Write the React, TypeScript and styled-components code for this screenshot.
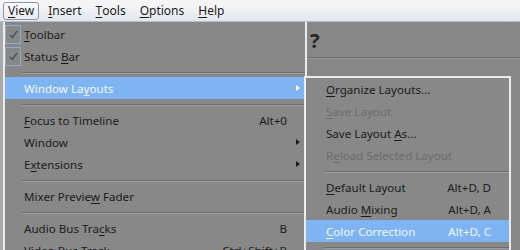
import React from "react";
import styled, { createGlobalStyle } from "styled-components";

const GlobalStyle = createGlobalStyle`
  html, body {
    margin: 0;
    padding: 0;
    background: #878787;
  }
  body {
    font-family: "Noto Sans", "Open Sans", sans-serif;
    font-size: 11.6px;
    color: #1b1b1b;
  }
`;

const Screen = styled.div({
  width: "520px",
  height: "250px",
  overflow: "hidden",
  position: "relative",
  display: "flex",
  flexDirection: "column",
  background: "#878787"
});

const MenuBar = styled.div({
  height: "22px",
  boxSizing: "border-box",
  display: "flex",
  alignItems: "center",
  paddingLeft: "1px",
  background: "linear-gradient(#f6f6f7 0%, #f3f4f6 35%, #e3e6ee 100%)",
  borderBottom: "1px solid #b9bdc6"
});

const MenuTitle = styled.div<{ $open?: boolean }>(({ $open }) => ({
  height: "18px",
  boxSizing: "border-box",
  display: "flex",
  alignItems: "center",
  padding: $open ? "0 4px" : "0 7px",
  margin: $open ? "0 2px" : 0,
  border: $open ? "1px solid #8c95a4" : "none",
  borderRadius: "3px",
  background: $open ? "linear-gradient(#fbfbfc, #e9ebf0)" : "transparent",
  fontSize: "12px",
  color: "#1b1b1b"
}));

const Workspace = styled.div({
  flex: 1,
  position: "relative",
  display: "flex"
});

const LeftStrip = styled.div({
  width: "3px",
  background: "#a9a9a9"
});

const LeftPane = styled.div({
  width: "304px"
});

const RightPane = styled.div({
  flex: 1,
  display: "flex",
  flexDirection: "column"
});

const PaneHeading = styled.div({
  height: "36px",
  boxSizing: "border-box",
  borderBottom: "1px solid #6f6f6f",
  boxShadow: "0 1px 0 #959595",
  padding: "8px 0 0 3px",
  fontWeight: 700,
  fontSize: "20px",
  lineHeight: "22px",
  color: "#262626"
});

const Menu = styled.div<{ $left: number; $top: number; $width: number }>(
  ({ $left, $top, $width }) => ({
    position: "absolute",
    left: `${$left}px`,
    top: `${$top}px`,
    width: `${$width}px`,
    boxSizing: "border-box",
    background: "#888888",
    borderLeft: "2px solid #ececec",
    borderRight: "2px solid #ececec",
    paddingTop: "1px",
    paddingBottom: "4px"
  })
);

const SubMenu = styled(Menu)({
  borderTop: "2px solid #ececec",
  paddingTop: 0
});

const Row = styled.div<{ $active?: boolean; $disabled?: boolean; $pad: number }>(
  ({ $active, $disabled, $pad }) => ({
    height: "22px",
    display: "flex",
    alignItems: "center",
    position: "relative",
    paddingLeft: `${$pad}px`,
    paddingRight: "18px",
    background: $active ? "#7fb4f3" : "transparent",
    color: $active ? "#f4f7fb" : $disabled ? "#6c6c6c" : "#1b1b1b",
    whiteSpace: "nowrap"
  })
);

const Label = styled.span({
  flex: 1
});

const Shortcut = styled.span({
  textAlign: "right"
});

const Arrow = styled.span<{ $active?: boolean }>(({ $active }) => ({
  position: "absolute",
  right: "5px",
  top: "8px",
  width: 0,
  height: 0,
  borderTop: "3.5px solid transparent",
  borderBottom: "3.5px solid transparent",
  borderLeft: `4px solid ${$active ? "#ffffff" : "#1b1b1b"}`
}));

const CheckBox = styled.span({
  position: "absolute",
  left: "0px",
  top: "2px",
  width: "16px",
  height: "19px",
  boxSizing: "border-box",
  border: "1px solid #92aacb",
  display: "flex",
  alignItems: "center",
  justifyContent: "center"
});

const Separator = styled.div<{ $inset: number }>(({ $inset }) => ({
  height: "10px",
  display: "flex",
  flexDirection: "column",
  justifyContent: "flex-start",
  paddingTop: "5px",
  boxSizing: "border-box",
  marginLeft: `${$inset}px`,
  "&::before": {
    content: '""',
    height: "1px",
    background: "#6e6e6e"
  },
  "&::after": {
    content: '""',
    height: "1px",
    background: "#9d9d9d"
  }
}));

const Key = styled.u({
  textDecorationThickness: "1px",
  textUnderlineOffset: "2px"
});

const Check = () => (
  <svg width="9" height="9" viewBox="0 0 9 9">
    <path d="M1 5 L3.5 7.5 L8 1" fill="none" stroke="#4f4f4f" strokeWidth="1.4" />
  </svg>
);

type Item = {
  pre?: string;
  key?: string;
  post?: string;
  shortcut?: string;
  sub?: boolean;
  active?: boolean;
  disabled?: boolean;
  checked?: boolean;
  sep?: boolean;
};

const viewItems: Item[] = [
  { key: "T", post: "oolbar", checked: true },
  { pre: "Status ", key: "B", post: "ar", checked: true },
  { sep: true },
  { pre: "Window La", key: "y", post: "outs", sub: true, active: true },
  { sep: true },
  { key: "F", post: "ocus to Timeline", shortcut: "Alt+0" },
  { pre: "Window", sub: true },
  { pre: "E", key: "x", post: "tensions", sub: true },
  { sep: true },
  { pre: "Mixer Previe", key: "w", post: " Fader" },
  { sep: true },
  { pre: "Audio Bus Tra", key: "c", post: "ks", shortcut: "B" },
  { pre: "Video Bus Track", shortcut: "Ctrl+Shift+B" }
];

const layoutItems: Item[] = [
  { key: "O", post: "rganize Layouts..." },
  { key: "S", post: "ave Layout", disabled: true },
  { pre: "Save Layout ", key: "A", post: "s..." },
  { pre: "R", key: "e", post: "load Selected Layout", disabled: true },
  { sep: true },
  { key: "D", post: "efault Layout", shortcut: "Alt+D, D" },
  { pre: "Audio ", key: "M", post: "ixing", shortcut: "Alt+D, A" },
  { key: "C", post: "olor Correction", shortcut: "Alt+D, C", active: true },
  { sep: true }
];

const renderItems = (items: Item[], pad: number, sepInset: number) =>
  items.map((it, i) =>
    it.sep ? (
      <Separator key={i} $inset={sepInset} />
    ) : (
      <Row key={i} $pad={pad} $active={it.active} $disabled={it.disabled}>
        {it.checked && (
          <CheckBox>
            <Check />
          </CheckBox>
        )}
        <Label>
          {it.pre}
          {it.key && <Key>{it.key}</Key>}
          {it.post}
        </Label>
        {it.shortcut && <Shortcut>{it.shortcut}</Shortcut>}
        {it.sub && <Arrow $active={it.active} />}
      </Row>
    )
  );

const App = () => (
  <Screen>
    <GlobalStyle />
    <MenuBar>
      <MenuTitle $open>
        <Key>V</Key>iew
      </MenuTitle>
      <MenuTitle>
        <Key>I</Key>nsert
      </MenuTitle>
      <MenuTitle>
        <Key>T</Key>ools
      </MenuTitle>
      <MenuTitle>
        <Key>O</Key>ptions
      </MenuTitle>
      <MenuTitle>
        <Key>H</Key>elp
      </MenuTitle>
    </MenuBar>
    <Workspace>
      <LeftStrip />
      <LeftPane />
      <RightPane>
        <PaneHeading>?</PaneHeading>
      </RightPane>
      <Menu $left={3} $top={0} $width={304}>
        {renderItems(viewItems, 19, 17)}
      </Menu>
      <SubMenu $left={304} $top={54} $width={207}>
        {renderItems(layoutItems, 20, 18)}
      </SubMenu>
    </Workspace>
  </Screen>
);

export default App;
